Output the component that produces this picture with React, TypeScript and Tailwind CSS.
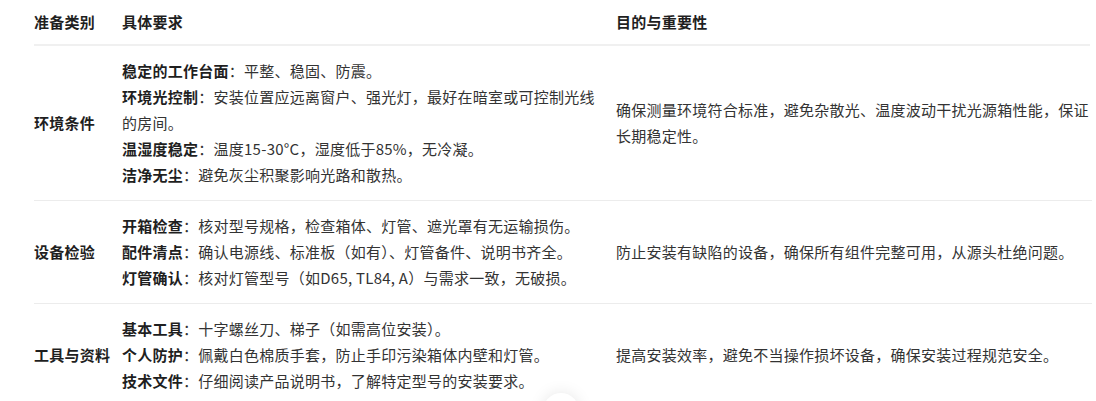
const rows = [
  {
    category: '环境条件',
    items: [
      ['稳定的工作台面', '平整、稳固、防震。'],
      ['环境光控制', '安装位置应远离窗户、强光灯，最好在暗室或可控制光线的房间。'],
      ['温湿度稳定', '温度15-30°C，湿度低于85%，无冷凝。'],
      ['洁净无尘', '避免灰尘积聚影响光路和散热。'],
    ],
    purpose: '确保测量环境符合标准，避免杂散光、温度波动干扰光源箱性能，保证长期稳定性。',
  },
  {
    category: '设备检验',
    items: [
      ['开箱检查', '核对型号规格，检查箱体、灯管、遮光罩有无运输损伤。'],
      ['配件清点', '确认电源线、标准板（如有）、灯管备件、说明书齐全。'],
      ['灯管确认', '核对灯管型号（如D65, TL84, A）与需求一致，无破损。'],
    ],
    purpose: '防止安装有缺陷的设备，确保所有组件完整可用，从源头杜绝问题。',
  },
  {
    category: '工具与资料',
    items: [
      ['基本工具', '十字螺丝刀、梯子（如需高位安装）。'],
      ['个人防护', '佩戴白色棉质手套，防止手印污染箱体内壁和灯管。'],
      ['技术文件', '仔细阅读产品说明书，了解特定型号的安装要求。'],
    ],
    purpose: '提高安装效率，避免不当操作损坏设备，确保安装过程规范安全。',
  },
]

export default function App() {
  return (
    <div className="relative h-[401px] overflow-hidden bg-white pl-[34px] pr-[4px] font-['Noto_Sans_CJK_SC','Noto_Sans',sans-serif] text-[15px] leading-[26px] tracking-[0.25px] text-[#333]">
      {/* header */}
      <div className="mr-[2px] grid h-[46px] grid-cols-[88px_494px_1fr] items-center border-b-2 border-[#f0f0f0] font-bold text-[#1f1f1f]">
        <div>准备类别</div>
        <div>具体要求</div>
        <div>目的与重要性</div>
      </div>

      {rows.map((row) => (
        <div
          key={row.category}
          className="grid grid-cols-[88px_494px_1fr] items-center border-b border-[#ececec] py-3"
        >
          <div className="font-bold text-[#1f1f1f]">{row.category}</div>
          <div className="pr-[20px]">
            {row.items.map(([label, text]) => (
              <p key={label}>
                <span className="font-bold text-[#1f1f1f]">{label}</span>：{text}
              </p>
            ))}
          </div>
          <div>{row.purpose}</div>
        </div>
      ))}

      {/* floating round button peeking from the bottom */}
      <div className="absolute left-[543px] top-[393px] h-9 w-9 rounded-full bg-white shadow-[0_0_16px_rgba(0,0,0,0.1)]" />
    </div>
  )
}
